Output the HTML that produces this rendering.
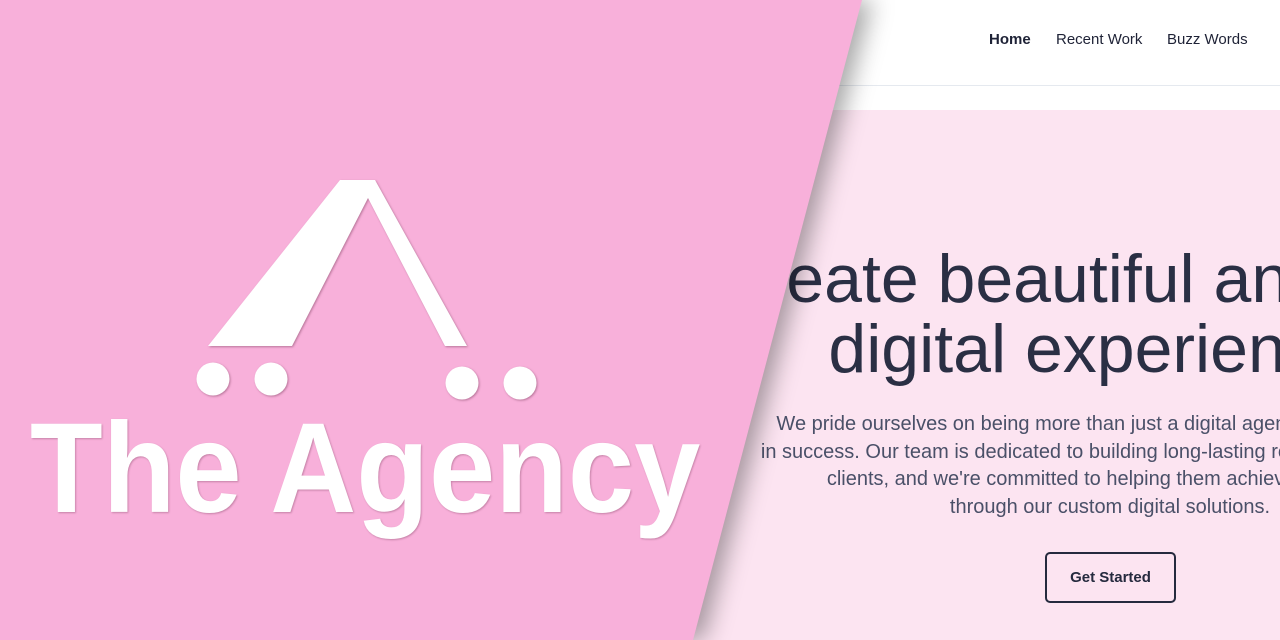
<!DOCTYPE html>
<html><head><meta charset="utf-8"><style>
*{margin:0;padding:0;box-sizing:border-box}
body{width:1280px;height:640px;overflow:hidden;position:relative;background:#fff;font-family:"Liberation Sans",sans-serif}
.hdr{position:absolute;left:0;top:0;width:1280px;height:86px;border-bottom:1px solid #e5e9ef;background:#fff}
.nav{position:absolute;top:31px;font-size:15px;color:#1e2236}
.hero{position:absolute;left:0;top:110px;width:1280px;height:530px;background:#fce4f1}
.c{position:absolute;left:610px;width:1000px;text-align:center;white-space:nowrap}
.h{font-size:68px;color:#2a2f44;line-height:70px}
.p{font-size:20px;color:#4a5068;line-height:27.5px}
.btn{position:absolute;left:1045px;top:552px;width:131px;height:51px;border:2px solid #252a3e;border-radius:5px;font-size:15px;font-weight:bold;color:#252a3e;text-align:center;line-height:47px}
.wrap{position:absolute;left:0;top:0;width:1280px;height:640px;overflow:hidden;filter:drop-shadow(10px 0 12px rgba(0,0,0,.35))}
.poly{position:absolute;left:0;top:0;width:1280px;height:640px;background:#f8b0da;clip-path:polygon(0 0,862px 0,693px 640px,0 640px)}
.logo{position:absolute;left:0;top:0}
.t{position:absolute;left:30px;top:395px;font-size:128px;font-weight:bold;color:#fff;white-space:nowrap;transform-origin:0 0;transform:scaleX(.93);text-shadow:1px 1px 2px rgba(120,60,90,.4)}
</style></head><body>
<div class="hdr"></div>
<div class="nav" style="left:989px;font-weight:bold">Home</div>
<div class="nav" style="left:1056px">Recent Work</div>
<div class="nav" style="left:1167px">Buzz Words</div>
<div class="hero"></div>
<div class="c h" style="top:244px">We create beautiful and engaging</div>
<div class="c h" style="top:314px">digital experiences</div>
<div class="c p" style="top:411px">We pride ourselves on being more than just a digital agency; we're partners<br>in success. Our team is dedicated to building long-lasting relationships with our<br>clients, and we're committed to helping them achieve their goals<br>through our custom digital solutions.</div>
<div class="btn">Get Started</div>
<div class="wrap"><div class="poly"></div></div>
<svg class="logo" width="700" height="640" style="filter:drop-shadow(1px 1px 1px rgba(120,60,90,.5))">
<polygon points="340,180 375,180 467,346 445,346 368,198 292,346 208,346" fill="#fff"/>
<circle cx="213" cy="379" r="16.5" fill="#fff"/><circle cx="271" cy="379" r="16.5" fill="#fff"/>
<circle cx="462" cy="383" r="16.5" fill="#fff"/><circle cx="520" cy="383" r="16.5" fill="#fff"/>
</svg>
<div class="t">The Agency</div>
</body></html>
